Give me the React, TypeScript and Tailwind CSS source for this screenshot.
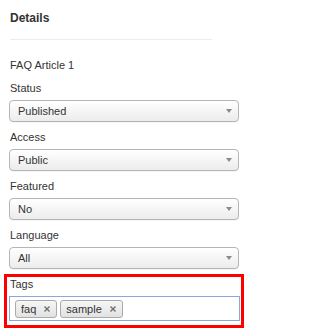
import React from 'react'

type Field = {
  label: string
  value: string
}

const fields: Field[] = [
  { label: 'Status', value: 'Published' },
  { label: 'Access', value: 'Public' },
  { label: 'Featured', value: 'No' },
  { label: 'Language', value: 'All' },
]

const tags = ['faq', 'sample']

function SelectBox({ value }: { value: string }) {
  return (
    <div className="flex items-center justify-between h-[22px] w-full rounded-[4px] border border-[#b5b5b5] bg-gradient-to-b from-white to-[#ececec] pl-[8px] pr-[6px] shadow-[0_1px_0_rgba(0,0,0,0.04)]">
      <span className="text-[11px] leading-[14px] text-[#333]">{value}</span>
      <svg width="6" height="4" viewBox="0 0 6 4">
        <path d="M0 0 L6 0 L3 4 Z" fill="#8a8a8a" />
      </svg>
    </div>
  )
}

function TagChip({ name }: { name: string }) {
  return (
    <div className="flex items-center h-[18px] rounded-[3px] border border-[#aaa] bg-gradient-to-b from-[#f6f6f6] to-[#e2e2e2] pl-[5px] pr-[6px]">
      <span className="text-[11px] leading-[14px] text-[#333]">{name}</span>
      <svg className="ml-[8px]" width="6" height="6" viewBox="0 0 6 6">
        <path d="M0.5 0.5 L5.5 5.5 M5.5 0.5 L0.5 5.5" stroke="#6f6f6f" strokeWidth="1.4" />
      </svg>
    </div>
  )
}

export default function App() {
  return (
    <div
      className="w-[250px] h-[335px] bg-white pl-[9px] pr-[11px] pt-[11px] overflow-hidden"
      style={{ fontFamily: '"Liberation Sans", Arial, sans-serif' }}
    >
      {/* Header */}
      <h2 className="pl-px text-[12px] leading-[14px] font-bold text-[#333]">Details</h2>
      <div className="mt-[14px] ml-px h-px w-[202px] bg-[#ececec]" />

      <p className="mt-[18px] pl-px text-[11px] leading-[14px] text-[#333]">FAQ Article 1</p>

      {/* Selects */}
      <div className="mt-[9px] flex flex-col gap-[8px]">
        {fields.map((f) => (
          <div key={f.label}>
            <label className="block pl-px mb-[5px] text-[11px] leading-[14px] text-[#333]">{f.label}</label>
            <SelectBox value={f.value} />
          </div>
        ))}
      </div>

      {/* Tags (highlighted) */}
      <div className="mt-[5px] -ml-[5px] w-[240px] border-[3px] border-[#ff0000] pl-[2px] pb-[4px]">
        <label className="block pl-[1px] mb-[5px] text-[11px] leading-[14px] text-[#333]">Tags</label>
        <div className="flex items-center gap-[3px] h-[25px] w-[231px] border border-[#86a9dc] bg-white px-[5px]">
          {tags.map((t) => (
            <TagChip key={t} name={t} />
          ))}
        </div>
      </div>
    </div>
  )
}
